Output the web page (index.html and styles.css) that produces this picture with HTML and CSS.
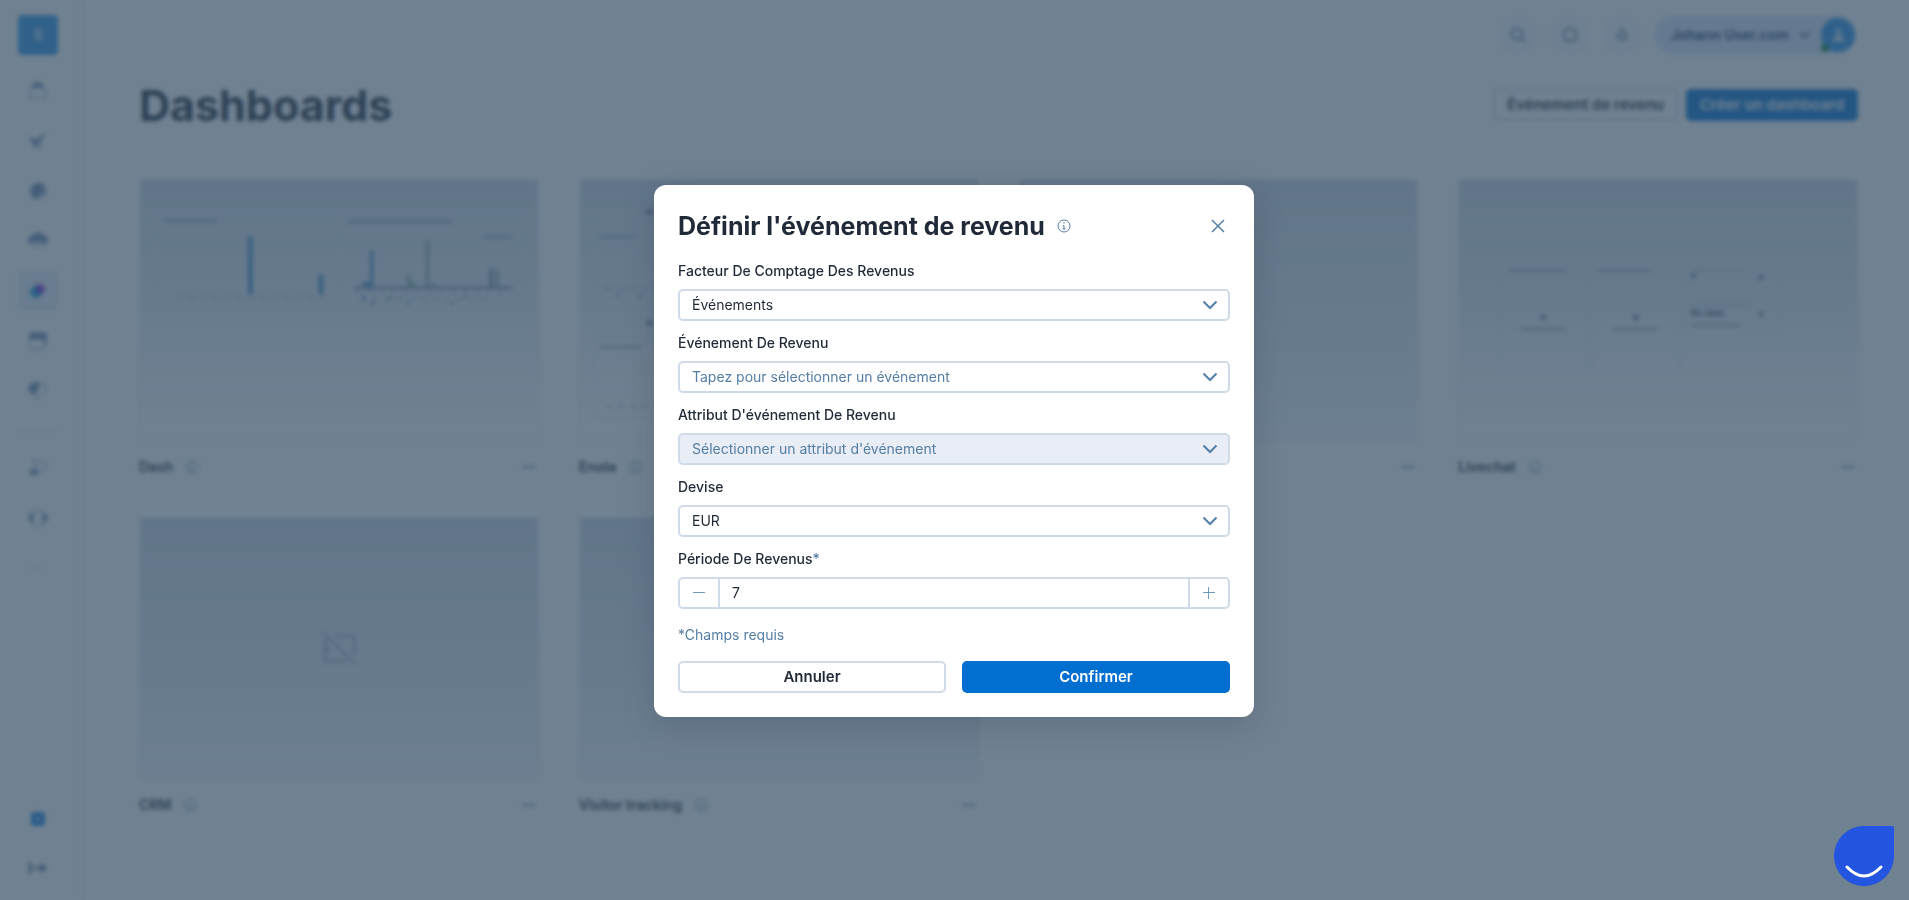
FILE: index.html
```html
<!DOCTYPE html>
<html lang="fr">
  <head>
    <meta charset="UTF-8" />
    <meta name="viewport" content="width=device-width, initial-scale=1.0" />
    <title>Dashboards</title>
    <link rel="stylesheet" href="styles.css">
  </head>
  <body>
    <!-- Shared icons -->
    <svg class="sprite" aria-hidden="true">
      <symbol id="icon-info" viewBox="0 0 14 14">
        <circle cx="7" cy="7" r="6" />
        <path d="M7 6.500v3.500M7 3.500v1.200M5.800 6.500H7M5.600 10h2.800" />
      </symbol>
      <symbol id="icon-chevron" viewBox="0 0 16 16">
        <path d="M1.500 4.500 8 11l6.500-6.500" />
      </symbol>
      <symbol id="icon-dots" viewBox="0 0 16 16">
        <path d="M2 8h3M6.500 8h3M11 8h3" />
      </symbol>
    </svg>

    <div class="app">
      <nav class="sidebar">
        <a class="logo" href="#">S</a>
        <a class="nav-item" href="#" aria-label="Contacts">
          <svg viewBox="0 0 20 20"><path d="M2 8v9h16V9l-4-3" /><path class="fill" d="M3 7l3-5h7l3 6-5-2z" /></svg>
        </a>
        <a class="nav-item" href="#" aria-label="Campagnes">
          <svg viewBox="0 0 20 20"><path d="M2 5l3 4M13 9l-1 9-4-3" /><path class="fill" d="M18 2 7 16l-5-9 6 2z" /></svg>
        </a>
        <a class="nav-item" href="#" aria-label="Automatisation">
          <svg viewBox="0 0 20 20"><circle cx="10" cy="10" r="8" /><path class="fill" d="M4 6l6-3 6 1v9l-4 1-5 4-3-5z" /></svg>
        </a>
        <a class="nav-item" href="#" aria-label="Données">
          <svg viewBox="0 0 20 20"><path d="M2 12l8 5 8-5" /><path class="fill" d="M0 8l6-5 4-1 4 1 6 5-2 5-5-3-3 2-4-2-4 3z" /></svg>
        </a>
        <a class="nav-item active" href="#" aria-label="Dashboards">
          <svg viewBox="0 0 20 20"><circle cx="8" cy="11" r="6" fill="#19a8d8" stroke="none" /><circle cx="12" cy="8" r="5" fill="#9b3bd0" stroke="none" /><path d="M7 6h6v7H8z" fill="#3a3bd8" stroke="none" /></svg>
        </a>
        <a class="nav-item" href="#" aria-label="Calendrier">
          <svg viewBox="0 0 20 20"><rect x="2" y="3" width="15" height="15" rx="2" /><path class="fill" d="M2 2h16v11h-2V8H2z" /></svg>
        </a>
        <a class="nav-item" href="#" aria-label="Conversations">
          <svg viewBox="0 0 20 20"><path d="M12 3h3a5 5 0 0 1 3 6l-8 9-5-5" /><path class="fill" d="M1 5l4-3h7L9 10l-4 4-4-5z" /></svg>
        </a>
        <hr class="nav-divider" />
        <a class="nav-item" href="#" aria-label="Rapports">
          <svg viewBox="0 0 20 20"><path d="M3 2h4v8h3M10 3h4a4 4 0 0 1 0 9l-6 5" /><path class="fill" d="M2 12h7v4l-6 1z" /></svg>
        </a>
        <a class="nav-item" href="#" aria-label="Support">
          <svg viewBox="0 0 20 20"><circle cx="10" cy="10" r="8" /><path class="fill" d="M1 7l4-1v8l-3-1zM19 7l-4-1v8l3-1z" /></svg>
        </a>
        <a class="nav-item muted" href="#" aria-label="Plus"><svg><use href="#icon-dots" /></svg></a>
        <div class="nav-bottom">
          <a class="nav-item" href="#" aria-label="Ajouter">
            <svg viewBox="0 0 20 20"><rect x="3" y="3" width="14" height="14" rx="4" fill="#0a7fe0" stroke="none" /><path d="M10 7v6M7 10h6" stroke="#fff" /></svg>
          </a>
          <a class="nav-item expand" href="#" aria-label="Déplier le menu">
            <svg viewBox="0 0 20 20"><path d="M2 4v12M5 10h12M13 6l4 4-4 4" /></svg>
          </a>
        </div>
      </nav>

      <main class="main">
        <header class="topbar">
          <button class="round-btn" type="button" aria-label="Rechercher">
            <svg viewBox="0 0 16 16"><circle cx="7" cy="7" r="5.500" /><path d="M11 11l4 4" /></svg>
          </button>
          <button class="round-btn" type="button" aria-label="Aide">
            <svg viewBox="0 0 16 16"><circle cx="8" cy="8" r="6.500" /></svg>
          </button>
          <button class="round-btn" type="button" aria-label="Notifications">
            <svg viewBox="0 0 16 16"><path d="M4 11V7l4-5 4 5v4zM3 11h10M7 14h2" /></svg>
          </button>
          <button class="user-menu" type="button">
            Johann User.com
            <svg class="chevron"><use href="#icon-chevron" /></svg>
            <span class="avatar">
              <svg viewBox="0 0 16 16"><circle cx="8" cy="4" r="3" /><path d="M1 14c1-4 4-4 5-6h4c1 2 4 2 5 6z" /></svg>
              <span class="status"></span>
            </span>
          </button>
        </header>

        <div class="page-head">
          <h1>Dashboards</h1>
          <div class="page-actions">
            <button class="btn btn-outline" type="button">Événement de revenu</button>
            <button class="btn btn-primary" type="button">Créer un dashboard</button>
          </div>
        </div>

        <section class="cards">
          <article class="card">
            <div class="thumb">
              <svg viewBox="0 0 400 262">
                <g class="panel"><rect x="16" y="32" width="184" height="104" rx="4" /><rect x="204" y="32" width="180" height="104" rx="4" /></g>
                <path class="caption" d="M24 41h54M210 42h104M344 57h30" />
                <path class="grid-line" d="M36 60h150M36 78h150M36 97h150M216 62h160M216 78h160M216 94h160" />
                <path class="bars blue" d="M111 57v58M182 95v20" />
                <path class="caption dashed" d="M37 118h148" />
                <path class="axis" d="M216 108h158" />
                <path class="caption dashed" d="M216 112h158M222 120h126" />
                <path class="bars thin blue" d="M233 71v36M226 102v5M229 103v4" />
                <path class="bars thin green" d="M270 95v12M274 102v5M289 60v47M296 103v4M359 90v17" />
                <path class="bars thin" d="M353 89v18" />
                <circle cx="225" cy="118" r="2" fill="#3355d0" /><circle cx="234" cy="124" r="2" fill="#223a80" />
                <circle cx="252" cy="118" r="2" fill="#2fae7d" /><circle cx="270" cy="124" r="2" fill="#23a6c8" />
                <circle cx="327" cy="118" r="2" fill="#c0566a" /><circle cx="314" cy="124" r="2" fill="#a0668a" />
              </svg>
            </div>
            <div class="card-foot">
              <h2>Dash</h2>
              <svg class="info"><use href="#icon-info" /></svg>
              <button class="more" type="button" aria-label="Options"><svg><use href="#icon-dots" /></svg></button>
            </div>
          </article>

          <article class="card">
            <div class="thumb">
              <svg viewBox="0 0 400 262">
                <g class="panel"><rect x="14" y="46" width="180" height="82" rx="4" /><rect x="14" y="158" width="180" height="82" rx="4" /></g>
                <path class="caption strong" d="M67 32h6M67 144h6" />
                <path class="caption" d="M20 57h36M20 168h42" />
                <path class="caption dashed" d="M26 109h160M26 227h160" />
                <circle cx="38" cy="116" r="2" fill="#4a6fd0" /><circle cx="60" cy="117" r="2" fill="#4a6fd0" />
              </svg>
            </div>
            <div class="card-foot">
              <h2>Enola</h2>
              <svg class="info"><use href="#icon-info" /></svg>
              <button class="more" type="button" aria-label="Options"><svg><use href="#icon-dots" /></svg></button>
            </div>
          </article>

          <article class="card">
            <div class="thumb empty"></div>
            <div class="card-foot">
              <button class="more" type="button" aria-label="Options"><svg><use href="#icon-dots" /></svg></button>
            </div>
          </article>

          <article class="card">
            <div class="thumb">
              <svg viewBox="0 0 400 262">
                <g class="panel"><rect x="42" y="80" width="88" height="112" rx="3" /><rect x="134" y="80" width="88" height="112" rx="3" /><rect x="228" y="80" width="96" height="34" rx="3" /><rect x="228" y="120" width="96" height="34" rx="3" /></g>
                <path class="caption" d="M49 91h60M140 91h54M62 150h45M154 150h46M234 146h48" />
                <path class="caption light" d="M234 90h54M234 126h60" />
                <path class="caption strong" d="M82 138h5M175 138h5M302 98h4M302 135h4M234 96h4" />
                <text x="233" y="137">No data</text>
              </svg>
            </div>
            <div class="card-foot">
              <h2>Livechat</h2>
              <svg class="info"><use href="#icon-info" /></svg>
              <button class="more" type="button" aria-label="Options"><svg><use href="#icon-dots" /></svg></button>
            </div>
          </article>

          <article class="card">
            <div class="thumb empty">
              <svg class="no-image" viewBox="0 0 36 36"><path d="M14 6h19v19M26 31H4V9M2 2l32 32M5 22l5-5" /></svg>
            </div>
            <div class="card-foot">
              <h2>CRM</h2>
              <svg class="info"><use href="#icon-info" /></svg>
              <button class="more" type="button" aria-label="Options"><svg><use href="#icon-dots" /></svg></button>
            </div>
          </article>

          <article class="card">
            <div class="thumb empty"></div>
            <div class="card-foot">
              <h2>Visitor tracking</h2>
              <svg class="info"><use href="#icon-info" /></svg>
              <button class="more" type="button" aria-label="Options"><svg><use href="#icon-dots" /></svg></button>
            </div>
          </article>
        </section>
      </main>
    </div>

    <div class="overlay">
      <form class="modal" role="dialog" aria-modal="true" aria-labelledby="modal-title">
        <div class="modal-head">
          <h2 id="modal-title">Définir l'événement de revenu</h2>
          <svg class="info"><use href="#icon-info" /></svg>
          <button class="close" type="button" aria-label="Fermer">
            <svg viewBox="0 0 14 14"><path d="M1 1l12 12M13 1L1 13" /></svg>
          </button>
        </div>

        <div class="field">
          <label for="factor">Facteur De Comptage Des Revenus</label>
          <div class="select">
            <select id="factor"><option>Événements</option></select>
            <svg class="chevron"><use href="#icon-chevron" /></svg>
          </div>
        </div>
        <div class="field">
          <label for="event">Événement De Revenu</label>
          <div class="select">
            <select id="event" class="placeholder"><option>Tapez pour sélectionner un événement</option></select>
            <svg class="chevron"><use href="#icon-chevron" /></svg>
          </div>
        </div>
        <div class="field">
          <label for="attribute">Attribut D'événement De Revenu</label>
          <div class="select">
            <select id="attribute" class="placeholder" disabled><option>Sélectionner un attribut d'événement</option></select>
            <svg class="chevron"><use href="#icon-chevron" /></svg>
          </div>
        </div>
        <div class="field">
          <label for="currency">Devise</label>
          <div class="select">
            <select id="currency"><option>EUR</option></select>
            <svg class="chevron"><use href="#icon-chevron" /></svg>
          </div>
        </div>
        <div class="field">
          <label for="period">Période De Revenus<span class="required">*</span></label>
          <div class="stepper">
            <button type="button" aria-label="Diminuer"><svg viewBox="0 0 12 12"><path d="M0 5.500h12" /></svg></button>
            <input id="period" type="text" inputmode="numeric" value="7" />
            <button type="button" aria-label="Augmenter"><svg viewBox="0 0 12 12"><path d="M0 5.500h12M5.500 0v12" /></svg></button>
          </div>
        </div>

        <p class="note">*Champs requis</p>
        <div class="modal-actions">
          <button class="btn btn-outline" type="button">Annuler</button>
          <button class="btn btn-primary" type="submit">Confirmer</button>
        </div>
      </form>
    </div>

    <button class="chat" type="button" aria-label="Chat">
      <svg viewBox="0 0 60 60"><path d="M13 41q17 18 34 0" /></svg>
    </button>
  </body>
</html>
```

FILE: styles.css
```css
/* Global Styles */
* {
  box-sizing: border-box;
}
body {
  margin: 0;
  font-family: "Inter", sans-serif;
  font-size: 14px;
  line-height: 20px;
  color: #1f2937;
  background: #ffffff;
}
h1,
h2,
p {
  margin: 0;
}
button,
input,
select {
  font: inherit;
  color: inherit;
}
button {
  padding: 0;
  border: none;
  background: none;
  cursor: pointer;
}
svg {
  display: block;
  fill: none;
  stroke: currentColor;
}
.sprite {
  display: none;
}
.app {
  display: flex;
  min-height: 100vh;
}
/* Sidebar */
.sidebar {
  display: flex;
  flex-direction: column;
  align-items: center;
  gap: 10px;
  width: 84px;
  padding: 15px 24px 12px 18px;
  border-right: 2px solid #e6ebf4;
}
.logo,
.nav-item {
  display: flex;
  flex: none;
  align-items: center;
  justify-content: center;
  width: 40px;
  height: 40px;
  border-radius: 4px;
  color: #6f8bb0;
}
.logo {
  margin-bottom: 6px;
  background: #2b94e6;
  color: #d5e8fa;
  font-weight: 700;
  text-decoration: none;
}
.nav-item svg {
  width: 20px;
  height: 20px;
}
.nav-item .fill {
  fill: currentColor;
}
.nav-item.active {
  background: #e6edfa;
}
.nav-item.muted svg {
  width: 16px;
  height: 16px;
  opacity: 0.5;
}
.nav-item.expand {
  color: #35537f;
}
.nav-item.expand svg {
  stroke-width: 2;
}
.nav-divider {
  width: 40px;
  margin: 8px 0;
  border: none;
  border-top: 1px solid #cfd9e6;
}
.nav-bottom {
  display: flex;
  flex-direction: column;
  gap: 9px;
  margin-top: auto;
}
/* Main content */
.main {
  flex: 1;
  padding: 15px 51px 24px 55px;
}
.topbar {
  display: flex;
  justify-content: flex-end;
  gap: 12px;
  padding-right: 2px;
}
.round-btn {
  display: flex;
  align-items: center;
  justify-content: center;
  width: 40px;
  height: 40px;
  border-radius: 50%;
  background: #f5f9ff;
  color: #4f6a94;
}
.round-btn svg {
  width: 16px;
  height: 16px;
  stroke-width: 1.5;
}
.user-menu {
  display: flex;
  align-items: center;
  gap: 10px;
  height: 40px;
  padding: 0 1px 0 16px;
  border-radius: 20px;
  background: #dbe7fc;
  color: #1f3a68;
  font-weight: 600;
}
.user-menu .chevron {
  width: 12px;
  height: 12px;
  stroke-width: 2;
}
.avatar {
  position: relative;
  display: flex;
  align-items: center;
  justify-content: center;
  width: 34px;
  height: 34px;
  border-radius: 50%;
  background: #2492ea;
}
.avatar svg {
  width: 15px;
  height: 15px;
  fill: #d5e8fa;
  stroke: none;
}
.status {
  position: absolute;
  left: 0;
  bottom: 0;
  width: 8px;
  height: 8px;
  border-radius: 50%;
  background: #0a8040;
}
.page-head {
  display: flex;
  align-items: center;
  justify-content: space-between;
  margin: 26px 0 50px;
}
h1 {
  font-size: 43px;
  line-height: 48px;
  font-weight: 700;
}
.page-actions {
  display: flex;
  gap: 8px;
}
.btn {
  height: 32px;
  padding: 0 12px;
  border: 2px solid transparent;
  border-radius: 5px;
  font-size: 15px;
  font-weight: 600;
}
.btn-outline {
  border-color: #cfdbe8;
  background: #ffffff;
}
.btn-primary {
  background: #006fcf;
  color: #ffffff;
}
/* Dashboard cards */
.cards {
  display: grid;
  grid-template-columns: repeat(4, 1fr);
  gap: 40px;
}
.thumb {
  display: flex;
  align-items: center;
  justify-content: center;
  height: 262px;
  overflow: hidden;
  border: 1px solid #e2e8f0;
  border-radius: 4px;
  background: linear-gradient(#cdd6e5, #e4eaf2 50%, #ffffff 95%);
}
.thumb.empty {
  background: linear-gradient(#cdd6e5, #f2f6fc);
}
.thumb svg {
  flex: none;
  width: 100%;
}
.thumb .panel {
  stroke: #d9e2ee;
}
.thumb .caption {
  stroke: #8c9bb4;
  stroke-width: 2;
}
.thumb .light {
  stroke: #b8c5d6;
}
.thumb .strong {
  stroke: #6d7f9c;
  stroke-width: 5;
}
.thumb .dashed {
  stroke: #a5b2c5;
  stroke-dasharray: 6 6;
}
.thumb .grid-line {
  stroke: #d5deea;
}
.thumb .axis {
  stroke: #5d7494;
  stroke-width: 2;
}
.thumb .bars {
  stroke: #60769a;
  stroke-width: 4;
}
.thumb .thin {
  stroke-width: 3;
}
.thumb .blue {
  stroke: #2f83c4;
}
.thumb .green {
  stroke: #7ea6a0;
}
.thumb circle {
  stroke: none;
  opacity: 0.6;
}
.thumb text {
  fill: #3d4f6c;
  stroke: none;
  font-size: 9px;
  font-weight: 600;
}
.thumb .no-image {
  width: 36px;
  height: 36px;
  color: #a9b5c9;
  stroke-width: 3;
}
.card-foot {
  display: flex;
  align-items: center;
  gap: 12px;
  margin-top: 16px;
}
.card-foot h2 {
  font-size: 14px;
  line-height: 20px;
  font-weight: 600;
}
.card-foot .info {
  width: 14px;
  height: 14px;
  color: #5b7fa6;
}
.more {
  height: 20px;
  margin-left: auto;
  color: #4a6590;
}
.more svg {
  width: 16px;
  height: 16px;
  margin-right: 2px;
  stroke-width: 2;
}
/* Modal */
.overlay {
  position: fixed;
  z-index: 10;
  inset: 0;
  display: flex;
  align-items: center;
  justify-content: center;
  padding: 2px 1px 0 0;
  background: rgba(51, 75, 99, 0.7);
  backdrop-filter: blur(2px);
}
.modal {
  width: 600px;
  max-width: 90%;
  padding: 24px;
  border-radius: 12px;
  background: #ffffff;
  box-shadow: 0 8px 32px rgba(31, 41, 55, 0.2);
}
.modal-head {
  display: flex;
  align-items: center;
  gap: 12px;
  margin-bottom: 18px;
}
.modal-head h2 {
  font-size: 25px;
  line-height: 34px;
  font-weight: 700;
}
.modal-head .info {
  width: 14px;
  height: 14px;
  color: #557ea5;
}
.close {
  margin-left: auto;
  padding: 5px;
  color: #557ea5;
}
.close svg {
  width: 14px;
  height: 14px;
  stroke-width: 1.5;
}
.field {
  margin-bottom: 12px;
}
.field label {
  display: block;
  margin-bottom: 8px;
  font-weight: 500;
}
.required,
.note {
  color: #557ea5;
}
.select {
  position: relative;
}
.select select {
  display: block;
  width: 100%;
  height: 32px;
  padding: 0 32px 0 12px;
  border: 2px solid #cfdbe8;
  border-radius: 5px;
  background: #ffffff;
  appearance: none;
}
.select .placeholder {
  color: #557ea5;
}
.select select:disabled {
  background: #e9edf5;
  opacity: 1;
}
.select .chevron {
  position: absolute;
  top: 8px;
  right: 12px;
  width: 16px;
  height: 16px;
  color: #557ea5;
  stroke-width: 2;
  pointer-events: none;
}
.stepper {
  display: flex;
  height: 32px;
  border: 2px solid #cfdbe8;
  border-radius: 5px;
}
.stepper button {
  display: flex;
  flex: none;
  align-items: center;
  justify-content: center;
  width: 38px;
  color: #6c99c4;
}
.stepper svg {
  width: 12px;
  height: 12px;
}
.stepper input {
  flex: 1;
  min-width: 0;
  padding: 0 12px;
  border: solid #cfdbe8;
  border-width: 0 2px;
}
.note {
  margin: 16px 0;
}
.modal-actions {
  display: flex;
  gap: 16px;
}
.modal-actions .btn {
  flex: 1;
}
/* Chat bubble */
.chat {
  position: fixed;
  z-index: 20;
  right: 15px;
  bottom: 14px;
  width: 60px;
  height: 60px;
  border-radius: 50% 2px 50% 50%;
  background: #2355e0;
}
.chat svg {
  stroke: #ffffff;
  stroke-width: 3;
  stroke-linecap: round;
}
```
